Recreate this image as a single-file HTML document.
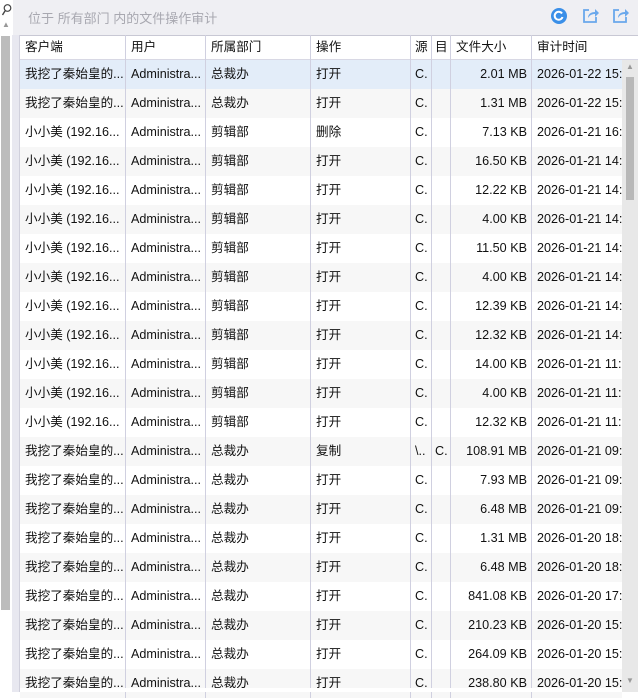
<!DOCTYPE html><html><head><meta charset="utf-8"><style>
*{margin:0;padding:0;box-sizing:border-box}
body{width:638px;height:692px;overflow:hidden;background:#fff;font-family:"Liberation Sans","Noto Sans CJK SC",sans-serif;font-size:12.6px;color:#111;position:relative}
.abs{position:absolute}
.row{position:absolute;left:20px;width:602px;height:29px}
.c{position:absolute;top:0;height:29px;line-height:29px;padding-left:5px;white-space:nowrap;overflow:hidden;border-left:1px solid #d0d0e0}
.r{text-align:right;padding-right:4px}
</style></head><body>
<div class="abs" style="left:0;top:0;width:638px;height:35px;background:#efeff3"></div>
<div class="abs" style="left:0;top:0;width:13px;height:35px;background:#fff"></div>
<svg class="abs" style="left:1px;top:3px" width="11" height="14"><circle cx="6.5" cy="5" r="3.3" fill="none" stroke="#444" stroke-width="1.2"/><line x1="4.3" y1="7.5" x2="1.5" y2="12" stroke="#444" stroke-width="1.4"/></svg>
<div class="abs" style="left:28px;top:8px;color:#a8a8b0;font-size:13px">位于 所有部门 内的文件操作审计</div>
<svg class="abs" style="left:550px;top:7px" width="18" height="18"><circle cx="9" cy="9" r="8" fill="#3a8fe8"/><path d="M12 6.5A4 4 0 1 0 12.5 10" stroke="#fff" stroke-width="2" fill="none"/></svg>
<svg class="abs" style="left:581px;top:6px" width="18" height="18"><path d="M8 4H3v12h12v-5" stroke="#6aa8ec" stroke-width="1.8" fill="none"/><path d="M7 12c0-4 3-6 7-6V3l4 4-4 4V8c-3 0-5 1-7 4z" fill="#6aa8ec"/></svg>
<svg class="abs" style="left:611px;top:6px" width="18" height="18"><path d="M8 4H3v12h12v-5" stroke="#6aa8ec" stroke-width="1.8" fill="none"/><path d="M7 12c0-4 3-6 7-6V3l4 4-4 4V8c-3 0-5 1-7 4z" fill="#6aa8ec"/></svg>
<div class="abs" style="left:0;top:35px;width:20px;height:657px;background:#e8e8f0"></div>
<div class="abs" style="left:0;top:35px;width:12px;height:657px;background:#fff"></div>
<div class="abs" style="left:2px;top:20px;font-size:8px;color:#999">▲</div>
<div class="abs" style="left:1px;top:36px;width:9px;height:574px;background:#bcbcbc"></div>
<div class="abs" style="left:19px;top:35px;width:1px;height:657px;background:#d0d0dc"></div>
<div class="abs" style="left:20px;top:35px;width:618px;height:25px;background:#fff;border-top:1px solid #c8c8d4;border-bottom:1px solid #d8d8e4"></div>
<div class="row" style="top:35px;height:25px">
<div class="c" style="left:0;width:105px;height:25px;line-height:24px;border-left:none">客户端</div>
<div class="c" style="left:105px;width:80px;height:25px;line-height:24px">用户</div>
<div class="c" style="left:185px;width:105px;height:25px;line-height:24px">所属部门</div>
<div class="c" style="left:290px;width:100px;height:25px;line-height:24px">操作</div>
<div class="c" style="left:390px;width:21px;height:25px;line-height:24px;padding-left:4px">源</div>
<div class="c" style="left:411px;width:19px;height:25px;line-height:24px;padding-left:3px">目</div>
<div class="c" style="left:430px;width:81px;height:25px;line-height:24px">文件大小</div>
<div class="c" style="left:511px;width:111px;height:25px;line-height:24px">审计时间</div>
</div>
<div id="rows"></div>
<div class="abs" style="left:622px;top:60px;width:16px;height:632px;background:#e8e8e8"></div>
<div class="abs" style="left:626px;top:62px;font-size:8px;color:#999">▲</div>
<div class="abs" style="left:626px;top:77px;width:8px;height:123px;background:#b8b8b8"></div>
<div class="abs" style="left:626px;top:676px;font-size:8px;color:#999">▼</div>
<script>
var d=[["我挖了秦始皇的...","总裁办","打开","","2.01 MB","2026-01-22 15:"],
["我挖了秦始皇的...","总裁办","打开","","1.31 MB","2026-01-22 15:"],
["小小美 (192.16...","剪辑部","删除","","7.13 KB","2026-01-21 16:"],
["小小美 (192.16...","剪辑部","打开","","16.50 KB","2026-01-21 14:"],
["小小美 (192.16...","剪辑部","打开","","12.22 KB","2026-01-21 14:"],
["小小美 (192.16...","剪辑部","打开","","4.00 KB","2026-01-21 14:"],
["小小美 (192.16...","剪辑部","打开","","11.50 KB","2026-01-21 14:"],
["小小美 (192.16...","剪辑部","打开","","4.00 KB","2026-01-21 14:"],
["小小美 (192.16...","剪辑部","打开","","12.39 KB","2026-01-21 14:"],
["小小美 (192.16...","剪辑部","打开","","12.32 KB","2026-01-21 14:"],
["小小美 (192.16...","剪辑部","打开","","14.00 KB","2026-01-21 11:"],
["小小美 (192.16...","剪辑部","打开","","4.00 KB","2026-01-21 11:"],
["小小美 (192.16...","剪辑部","打开","","12.32 KB","2026-01-21 11:"],
["我挖了秦始皇的...","总裁办","复制","C.","108.91 MB","2026-01-21 09:"],
["我挖了秦始皇的...","总裁办","打开","","7.93 MB","2026-01-21 09:"],
["我挖了秦始皇的...","总裁办","打开","","6.48 MB","2026-01-21 09:"],
["我挖了秦始皇的...","总裁办","打开","","1.31 MB","2026-01-20 18:"],
["我挖了秦始皇的...","总裁办","打开","","6.48 MB","2026-01-20 18:"],
["我挖了秦始皇的...","总裁办","打开","","841.08 KB","2026-01-20 17:"],
["我挖了秦始皇的...","总裁办","打开","","210.23 KB","2026-01-20 15:"],
["我挖了秦始皇的...","总裁办","打开","","264.09 KB","2026-01-20 15:"],
["我挖了秦始皇的...","总裁办","打开","","238.80 KB","2026-01-20 15:"]];
var h="";d.forEach(function(r,i){var bg=i==0?"#e3edf9":(i%2?"#f7f7f7":"#fff");
h+='<div class="row" style="top:'+(60+i*29)+'px;background:'+bg+'">'+
'<div class="c" style="left:0;width:105px;border-left:none">'+r[0]+'</div>'+
'<div class="c" style="left:105px;width:80px">Administra...</div>'+
'<div class="c" style="left:185px;width:105px">'+r[1]+'</div>'+
'<div class="c" style="left:290px;width:100px">'+r[2]+'</div>'+
'<div class="c" style="left:390px;width:21px;padding-left:4px">'+(r[3]?'\\..':'C.')+'</div>'+
'<div class="c" style="left:411px;width:19px;padding-left:3px">'+r[3]+'</div>'+
'<div class="c r" style="left:430px;width:81px">'+r[4]+'</div>'+
'<div class="c" style="left:511px;width:111px">'+r[5]+'</div></div>';});
document.getElementById("rows").innerHTML=h;
</script>
<div class="abs" style="left:20px;top:688px;width:602px;height:4px;background:#fff"></div>
</body></html>
